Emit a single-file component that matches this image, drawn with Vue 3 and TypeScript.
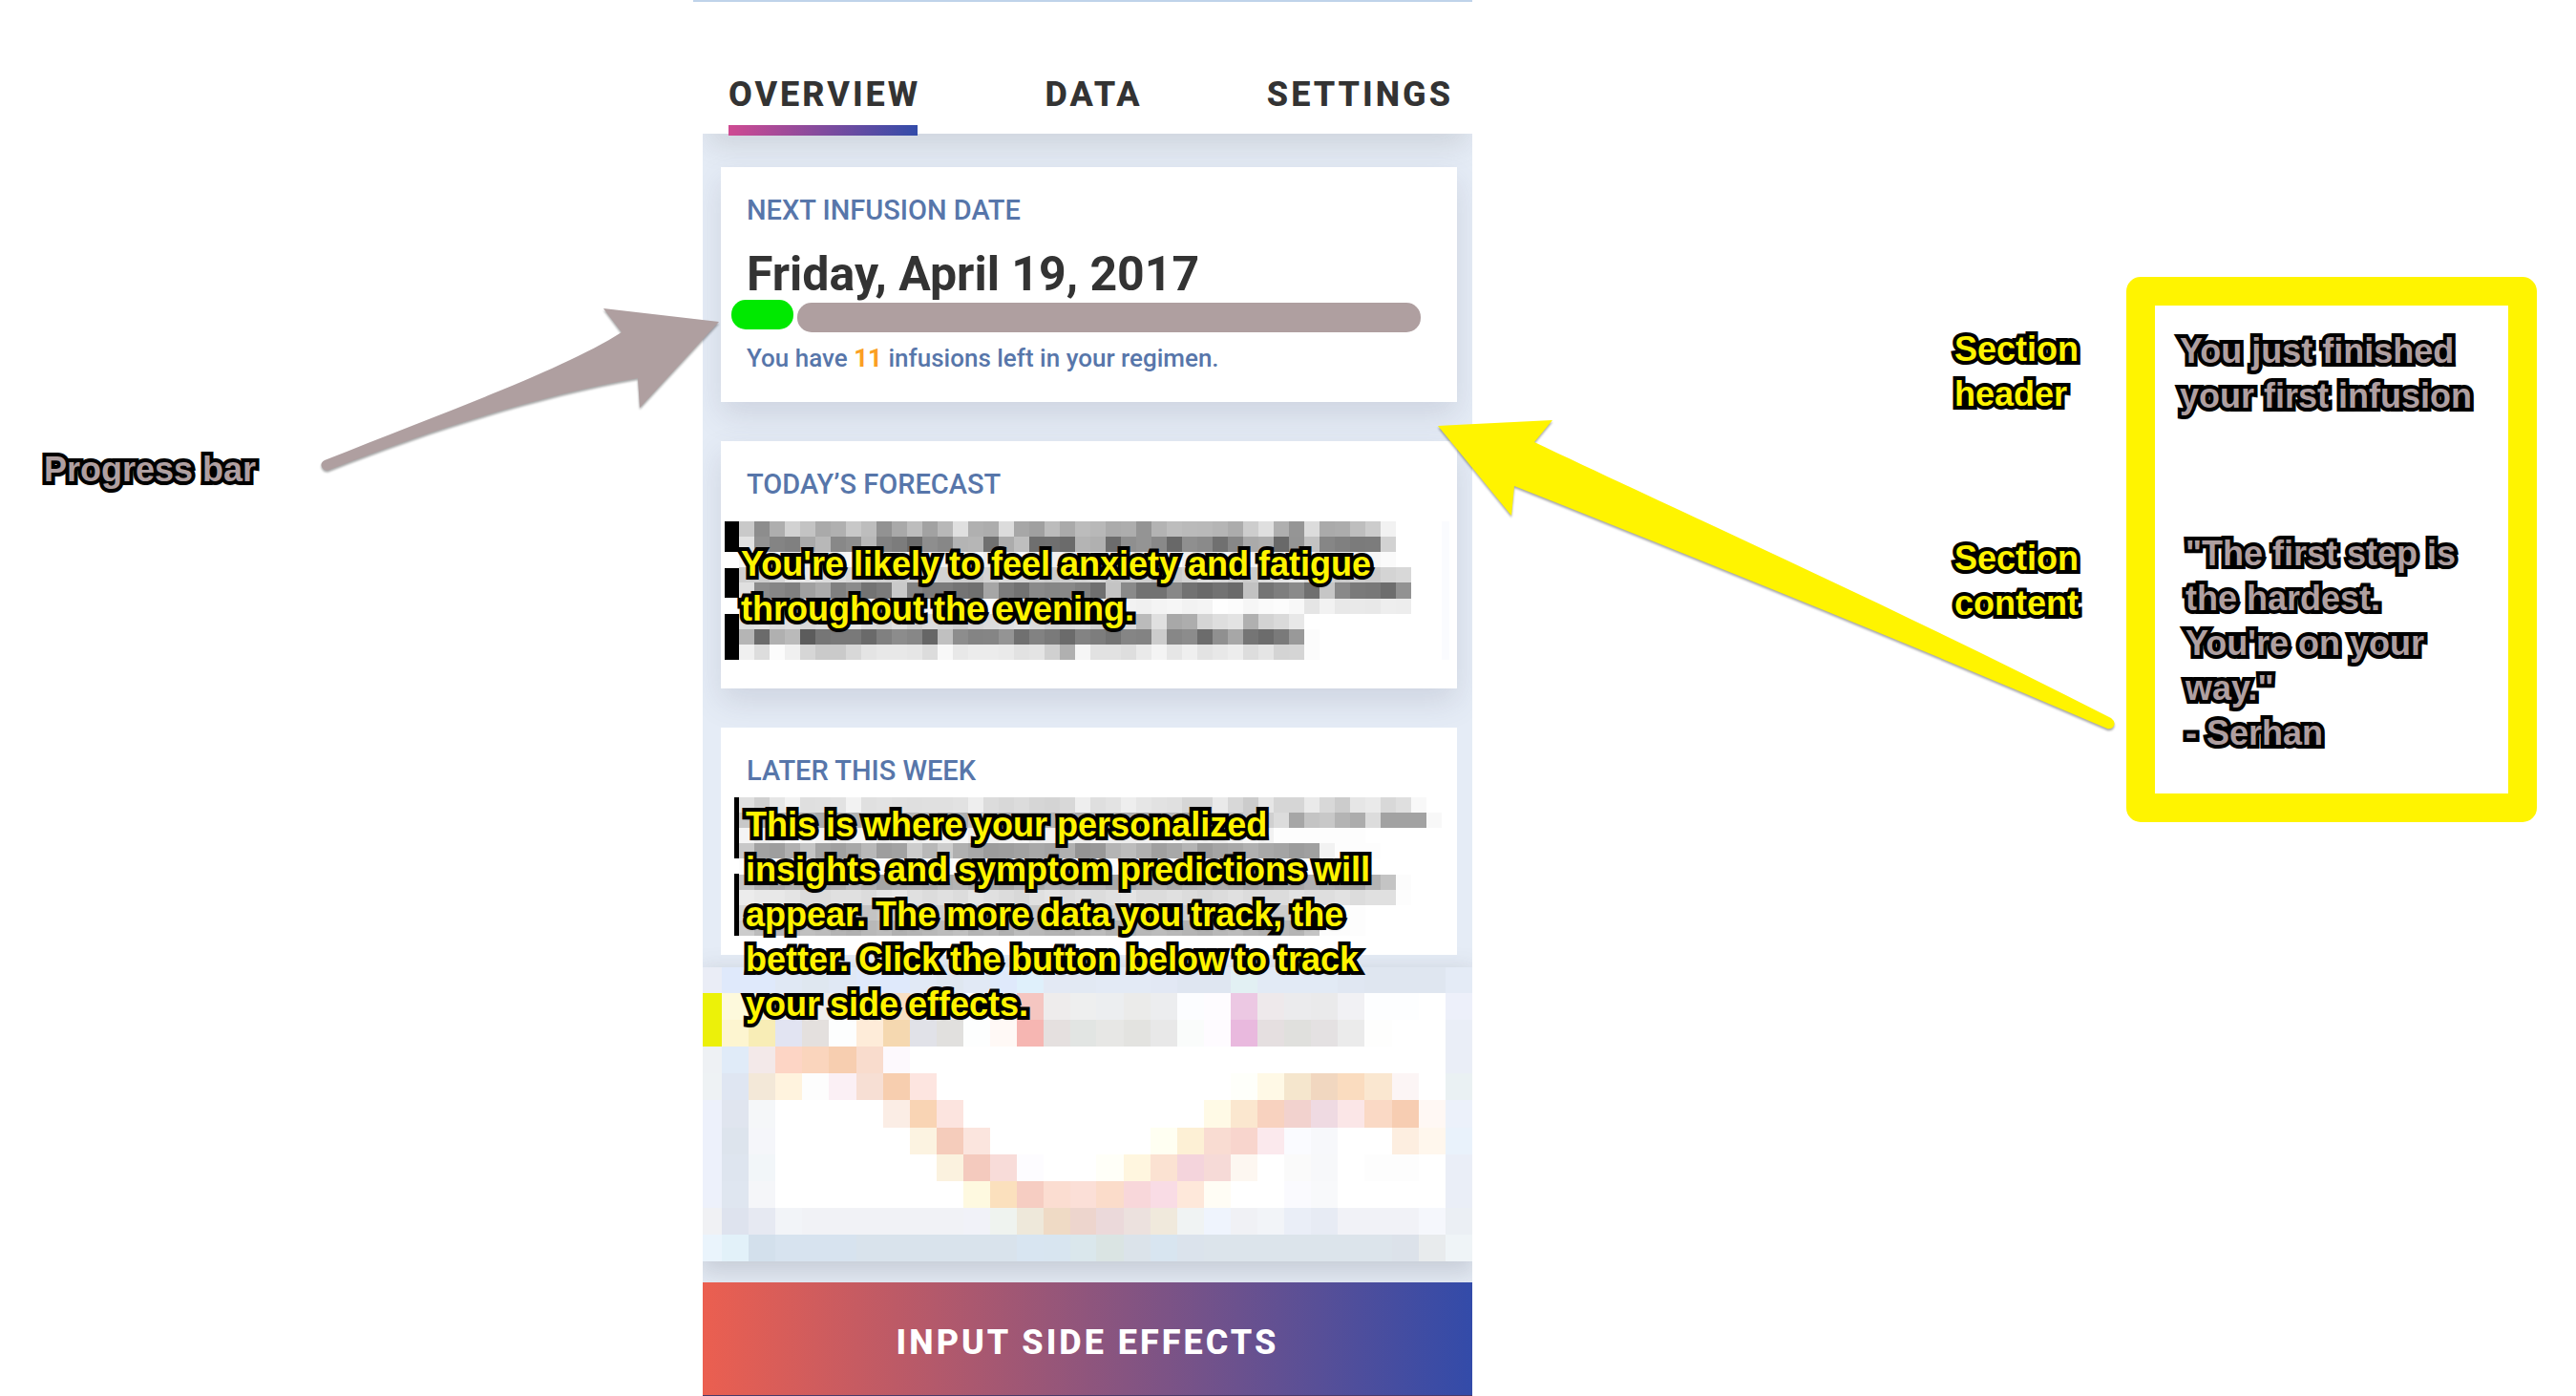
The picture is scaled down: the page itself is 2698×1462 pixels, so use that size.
<script setup lang="ts">
interface Cell {
  x: number
  y: number
  w: number
  h: number
  fill: string
}

const tabs = [
  { id: 'overview', label: 'OVERVIEW', active: true },
  { id: 'data', label: 'DATA', active: false },
  { id: 'settings', label: 'SETTINGS', active: false },
]

// Each row is a run of two-digit grey levels, one per 16px block.
const forecastRows = [
  'c98daed2c3aab0c8bd92a9bda2b8e0b0addca7a0bcaabcb8abad94b3bdbab9b5accddfaf95dcaaacbeccf2',
  'e2928480a9b8888eb8827c6b8e87b4b670acbe6f706bb4b06c8f9489688f8a7087aaae6994c286807b7cd2',
  'f8f4f4f6f0eef4f6f8f2f0eef4f0f8f6eef2f8eef0f0f4f6f0eef2f0fff0eef4f2f2faf6f4f8f0f0f4f6fa',
  'd0ced8e8e8dcddd8d4d0ced4d8d2ceccd4dcd8d0ccd0d4d8c8ccd0c8ccd4e0d8d0ccdce6e8dcd4ccd0ccd4d8',
  'e08c8680a0ac808b737bc9847b7b7470a67c728a8688806fc48a727288726a726ac2747e8a70c6897a786d92',
  'faf4f0f4f8f2eef0f4f6f0f8f4f0f2f6fafaf8f4f0f8f4faf4f2f0f4f6f2f4fefcf6fafcf8e5f2e8e9e8eeed',
  'e0e4dce0d8dce4e8dcd8e0d4dcd8d0d8dce0e4dcd4d8dcd0d8dcbbe0a8add5dee3b0d3dae8',
  'b56bb0ba5c7679796a808c8766c08d84859470827a6b837d748583cc878c6c90a7756c7a99fc',
  'f0ddfcf0d6cacad8e4e8e8e6dcf8e8ececeae2e4d0b0f6e2e2deeaf4e6efe3e8eddde5d4d5fc',
]

const weekRows = [
  'e0d0e6f2dfe0e2f2e0e2e0dfe0e0e2eedcd8dcd6d4d8eedfe3eee6e2e0d6d6ead8cce6d6d6ead8cce6ead8dff8',
  'c8b0b8c8b4acb8b4c0acb0b8bca8b0c4b8acb0a8b4b8acc0b8b0acb4b8a8b0bcc0ccd0dca6c4c8b4acdca2a2a2f8',
  'f4eef4fcf8f4f0f4f6eef4f0f4f2f6eef0f4f8eef2f0eef4f0eef2f4f8eef0eef4f8f2fdfdfdfdfdfd',
  'c8a29eb0c4a4a0a8b89ea2ccb8ccb0a89c9ea2a8a4b09498b4bcb0a0a8b49ca4a8b0a8a49ca0f2fdfdfd',
  'fcfafcfafafcfafafcfafafcfafafcfafafcfafafcfafafcfafafcfafafcfafafcfafafcfdfd',
  'c4b0a8b0b4a8acb8b0a4a8aca8b0b4aca8a4b0acb4a8acb0a8a4acb0a8b0b4aca8a0a4a8a8b0a8a4a0b4c4fc',
  'ece8e8e4dcdce0e0dce4e8e0dce0dce4e0dcd8e0e4dce0dce0e4dcdce0dcd8dce0dcdcdce2dedee2dce0e0fd',
  'd8ccc8ccd0c8ccd4c4c8c0c8ccd0c4ccc8c4d0c8ccc4c8ccd0c8c4c8ccd0c4c8ccc4d0ccd0c8fcfcfd',
  'ccbcb8b4c0bcb4b0b8bcb0b4b8bcc0b4b8b0bcb8b4b0b8bcb4b0b8bcb8b4b0b8bcb4b0b8b4c4fcfcfd',
]

const chartRows = [
  'eaedf6 dfe9fb dfe9fb e0e8f4 dfe7f0 e0e8f4 dfe9fb dfe9fb e1e9f5 dfe7f0 e1e9f5 dfe9fb dff0fb e3e9f4 e2e9f3 e3eaf5 e3eaf5 e2e8f4 dfe6f1 dfe6f1 e2f0f3 e2eaf5 e2eaf5 e2eaf5 e0e7f2 dfe6f0 dfe6f0 dfe6f0 e4ebf6',
  'ecf208 fdf9dc fbf7d8 f3f1ee efeeed f0f0f0 fbe9d3 f8dfc4 eceef0 ececec fefefe fdf5f2 f5c6c1 eeecec eeefef eceef0 ebebea ecedef fcfdff fefcff ecc8e3 eee9eb ebebed eaeaeb f1f1f4 fdfeff fdfeff ffffff edf0fa',
  'ecf00a fdf5d0 f8edb6 e2e4f2 e4e0de fdfefe feecd9 f5d8b0 e1e2e8 e1e0de fdfefe fff9f6 f6b6b2 e5e0df e2e5e3 e7e7e5 e3e3e0 e8e8e8 fafcfb fefbff e9b9de e5dfe0 e0e0dd e4e1e2 ebebeb fefefd ffffff ffffff eaeef7',
  'eef1f4 e0ebf8 f3e9e9 fdd5c5 fad5bd f7ceb0 f9dccd fdf9fd . . . . . . . . . . . . . . . . . . . . eaeef7',
  'eef2f4 dfe6f2 f3e8d8 fff3de fdfdfd fbf0f5 f7dfd4 f7ceaf fde5e0 . . . . . . . . . . . fefffa fff9e6 f5e6cd f1d7c0 fadcbf fae7d0 fcf5f5 . eaf1f3',
  'edf1fb e0e5ef f5f7f9 . . . . fbede5 f9d4b4 fce4df . . . . . . . . . fffae6 fbe7cf f8d2bf f2d2ce efdae2 fbe6e7 fad9c5 f7cdb2 fff8f4 ecf1fa',
  'edf1fb dde4ed f5f6fa . . . . . fcf3e1 f5ccbb fbe5de . . . . . . fffff2 fdf0d5 f9dcd2 f8d5cd fbe9ed fafbff f7f8fb . . fdeee0 fff7ed e9f2fb',
  'edf1fb dee5ef f2f6f9 . . . . . . fbf2df f4cabe f8dcd9 fdfcff . . fffff8 fff6df fbe2d2 f4d4dc f6dad7 fdf7f1 . fafafa f7f8fa . fdfdfd fdfdfd . eaeef7',
  'edf1fb dfe6f0 f5f6f9 . . . . . . . fef9e0 fbe0bd f6cdc2 fbddd1 fbdfd7 fbdcca f8d7da f9dce5 fee8da fffdf5 . . fafafe f8f9fb . . . . eaeef7',
  'f0f1f4 dee3ee e6e9f2 f2f4f8 f1f2f6 f1f2f6 f1f2f6 f1f2f6 f1f2f6 f1f2f6 f1f2f8 eff3ef eee8da efdac5 edd5cd ebd9da ece1de f0e9dc f0f3f3 eff4fd f0f1f5 f2f4f8 eaeef7 e7ebf4 f1f2f7 f1f2f7 f1f2f7 f5f7fc ebeff4',
  'eaf4fc e2f1f9 d3e0ec d7e3ef d7e3ef d7e3ef d9e3ec d9e3ec d9e3ec d9e3ec d9e3ec d9e3ec d8e5f1 d8e5f0 dae7ec dae4e3 dbe3ea d8e5f0 dbe3ec dce4eb dce4eb dce4eb dce4eb dce4eb dce4eb dce4eb dce2ea e8ebed eff4f7',
]

function greyCells(rows: string[], left: number): Cell[] {
  return rows.flatMap((row, r) =>
    (row.match(/../g) ?? []).map((v, c) => ({
      x: left + c * 16,
      y: Math.round(r * 16.1),
      w: 16,
      h: Math.round((r + 1) * 16.1) - Math.round(r * 16.1),
      fill: `#${v}${v}${v}`,
    })),
  )
}

function colourCells(rows: string[]): Cell[] {
  const xs = (c: number) => (c === 0 ? 0 : Math.round(20 + (c - 1) * 28.1))
  const ys = (r: number) => (r === 0 ? 0 : Math.round(27 + (r - 1) * 28.1))
  return rows.flatMap((row, r) =>
    row.split(' ').map((v, c) => ({
      x: xs(c),
      y: ys(r),
      w: xs(c + 1) - xs(c),
      h: ys(r + 1) - ys(r),
      fill: v === '.' ? '#fff' : `#${v}`,
    })),
  )
}

const forecastCells = greyCells(forecastRows, 15)
const weekCells = greyCells(weekRows, 15)
const chartCells = colourCells(chartRows)
</script>

<template>
  <main class="board">
    <aside class="left">
      <p class="note muted">Progress bar</p>
    </aside>

    <section class="phone">
      <nav class="tabs">
        <a v-for="tab in tabs" :key="tab.id" :href="'#' + tab.id" :class="['tab', { active: tab.active }]">{{ tab.label }}</a>
      </nav>

      <div class="screen">
        <article class="card">
          <h2>NEXT INFUSION DATE</h2>
          <p class="date">Friday, April 19, 2017</p>
          <div class="progress" role="progressbar" aria-label="Infusions completed" aria-valuenow="1" aria-valuemin="0" aria-valuemax="12">
            <span class="done"></span>
            <span class="rest"></span>
          </div>
          <p class="left-count">You have <strong>11</strong> infusions left in your regimen.</p>
        </article>

        <article class="card">
          <h2>TODAY’S FORECAST</h2>
          <svg class="mosaic forecast" viewBox="0 0 763 145" preserveAspectRatio="none" shape-rendering="crispEdges" aria-hidden="true">
            <rect v-for="(c, i) in forecastCells" :key="i" :x="c.x" :y="c.y" :width="c.w" :height="c.h" :fill="c.fill" />
            <path d="M0 0h15v32H0zM0 49h15v31H0zM0 97h15v48H0z" fill="#000" />
            <path d="M751 0h8v145h-8z" fill="#fafbfe" />
          </svg>
          <p class="note over-forecast">You're likely to feel anxiety and fatigue<br />throughout the evening.</p>
        </article>

        <article class="card week-card">
          <h2>LATER THIS WEEK</h2>
          <svg class="mosaic week" viewBox="0 0 763 145" preserveAspectRatio="none" shape-rendering="crispEdges" aria-hidden="true">
            <rect v-for="(c, i) in weekCells" :key="i" :x="c.x" :y="c.y" :width="c.w" :height="c.h" :fill="c.fill" />
            <path d="M10 0h5v64h-5zM10 80h5v65h-5z" fill="#000" />
          </svg>
          <p class="note over-week">This is where your personalized<br />insights and symptom predictions will<br />appear. The more data you track, the<br />better. Click the button below to track<br />your side effects.</p>
        </article>

        <svg class="chart" viewBox="0 0 807 308" preserveAspectRatio="none" shape-rendering="crispEdges" role="img" aria-label="Side effect trend">
          <rect v-for="(c, i) in chartCells" :key="i" :x="c.x" :y="c.y" :width="c.w" :height="c.h" :fill="c.fill" />
        </svg>

        <button class="cta" type="button">INPUT SIDE EFFECTS</button>
      </div>

      <svg class="arrow to-progress" width="424" height="180" viewBox="332 318 424 180" aria-hidden="true">
        <path d="M753 337L632 323L651 348C590 387 470 430 340 482Q335 485 337 489Q340 494 345 492C450 450 570 413 668 396L670 427Z" fill="#af9fa0" />
      </svg>
      <svg class="arrow to-gap" width="716" height="336" viewBox="1502 434 716 336" aria-hidden="true">
        <path d="M1506 446L1626 440L1607 463C1760 536 1980 634 2211 752Q2216 756 2214 760Q2212 764 2207 763C2000 674 1790 590 1586 509L1583 540Z" fill="#fff400" />
      </svg>
    </section>

    <aside class="right">
      <div class="labels">
        <p class="note">Section<br />header</p>
        <p class="note">Section<br />content</p>
      </div>
      <div class="callout">
        <p class="note muted">You just finished<br />your first infusion</p>
        <p class="note muted quote">"The first step is<br />the hardest.<br />You're on your<br />way."<br />- Serhan</p>
      </div>
    </aside>
  </main>
</template>

<style>
body {
  background: #fff;
}
</style>

<style scoped>
.board {
  display: grid;
  grid-template-columns: 726fr 816fr 1156fr;
  align-items: start;
  overflow: hidden;
  font-family: Roboto, sans-serif;
}

p,
h2 {
  margin: 0;
}

.note {
  position: relative;
  z-index: 3;
  font: bold 36px/47px "Liberation Sans", Arial, sans-serif;
  color: #fff400;
  white-space: nowrap;
  -webkit-text-stroke: 8px #000;
  paint-order: stroke fill;
  stroke-linejoin: round;
  text-shadow: 0 3px 3px rgba(0, 0, 0, 0.4);
}

.note.muted {
  color: #af9fa0;
}

.left {
  padding: 468px 0 0 46px;
}

.phone {
  position: relative;
}

.tabs {
  display: flex;
  justify-content: space-between;
  box-sizing: border-box;
  height: 140px;
  padding: 76px 20px 0 37px;
  border-top: 2px solid #bfd3ea;
}

.tab {
  position: relative;
  z-index: 2;
  height: 64px;
  font-size: 36px;
  font-weight: 800;
  line-height: 42px;
  letter-spacing: 3px;
  color: #333;
  text-decoration: none;
}

.tab.active::after {
  content: "";
  position: absolute;
  left: 0;
  right: 3px;
  bottom: 0;
  height: 11px;
  background: linear-gradient(90deg, #cf4a92, #334ca9);
}

.screen {
  position: relative;
  display: flex;
  flex-direction: column;
  margin-left: 10px;
  padding-top: 35px;
  overflow: hidden;
  background: #e5ecf6;
}

.screen::before {
  content: "";
  position: absolute;
  top: -20px;
  left: 10px;
  right: 10px;
  height: 20px;
  box-shadow: 0 6px 30px 4px rgba(90, 90, 90, 0.2);
}

.card {
  position: relative;
  margin: 0 16px 41px 19px;
  padding: 30px 38px 30px 27px;
  background: #fff;
  box-shadow: 0 14px 30px rgba(90, 90, 110, 0.16);
}

.week-card {
  margin-bottom: 13px;
  padding-bottom: 20px;
}

h2 {
  font-size: 29px;
  font-weight: 500;
  line-height: 31px;
  color: #5776aa;
}

.date {
  margin-top: 24px;
  font-size: 50px;
  font-weight: 700;
  line-height: 54px;
  color: #333;
}

.progress {
  position: relative;
  display: flex;
  gap: 4px;
  height: 34px;
  margin: 0 0 12px -16px;
}

.done,
.rest {
  height: 31px;
  border-radius: 15px;
}

.done {
  flex: 0 0 65px;
  background: #00e900;
}

.rest {
  flex: 1;
  align-self: flex-end;
  background: #af9fa0;
}

.left-count {
  font-size: 26px;
  font-weight: 500;
  line-height: 31px;
  color: #5776aa;
}

.left-count strong {
  color: #fb9f23;
}

.mosaic {
  display: block;
  width: calc(100% + 57px);
  height: 145px;
  margin-left: -23px;
}

.forecast {
  margin-top: 23px;
}

.week {
  margin-top: 12px;
}

.over-forecast,
.over-week {
  position: absolute;
}

.over-forecast {
  top: 105px;
  left: 21px;
}

.over-week {
  top: 78px;
  left: 26px;
}

.chart {
  position: relative;
  display: block;
  width: 100%;
  height: 308px;
  margin-bottom: 22px;
  box-shadow: 0 8px 24px 4px rgba(80, 80, 90, 0.2);
}

.week-card {
  z-index: 1;
  box-shadow: none;
}

.cta {
  position: relative;
  height: 119px;
  padding: 8px 0 0;
  border: 0;
  border-bottom: 1px solid #4a3a6a;
  background: linear-gradient(90deg, #eb5f50, #334ba9);
  font-family: inherit;
  font-size: 36px;
  font-weight: 800;
  line-height: 42px;
  letter-spacing: 3px;
  color: #fff;
}

.arrow {
  position: absolute;
  z-index: 4;
  filter: drop-shadow(0 2px 1px rgba(0, 0, 0, 0.35));
}

.to-progress {
  top: 318px;
  right: calc(100% - 30px);
}

.to-gap {
  top: 434px;
  left: calc(100% - 40px);
}

.right {
  display: flex;
  justify-content: flex-end;
  padding: 290px 41px 0 0;
}

.labels {
  display: flex;
  flex-direction: column;
  gap: 125px;
  width: 180px;
  padding-top: 52px;
}

.callout {
  display: flex;
  flex-direction: column;
  gap: 118px;
  box-sizing: border-box;
  width: 430px;
  padding: 24px 24px 40px 26px;
  border: 30px solid #fff400;
  border-radius: 15px;
}

.quote {
  margin-left: 6px;
}
</style>
